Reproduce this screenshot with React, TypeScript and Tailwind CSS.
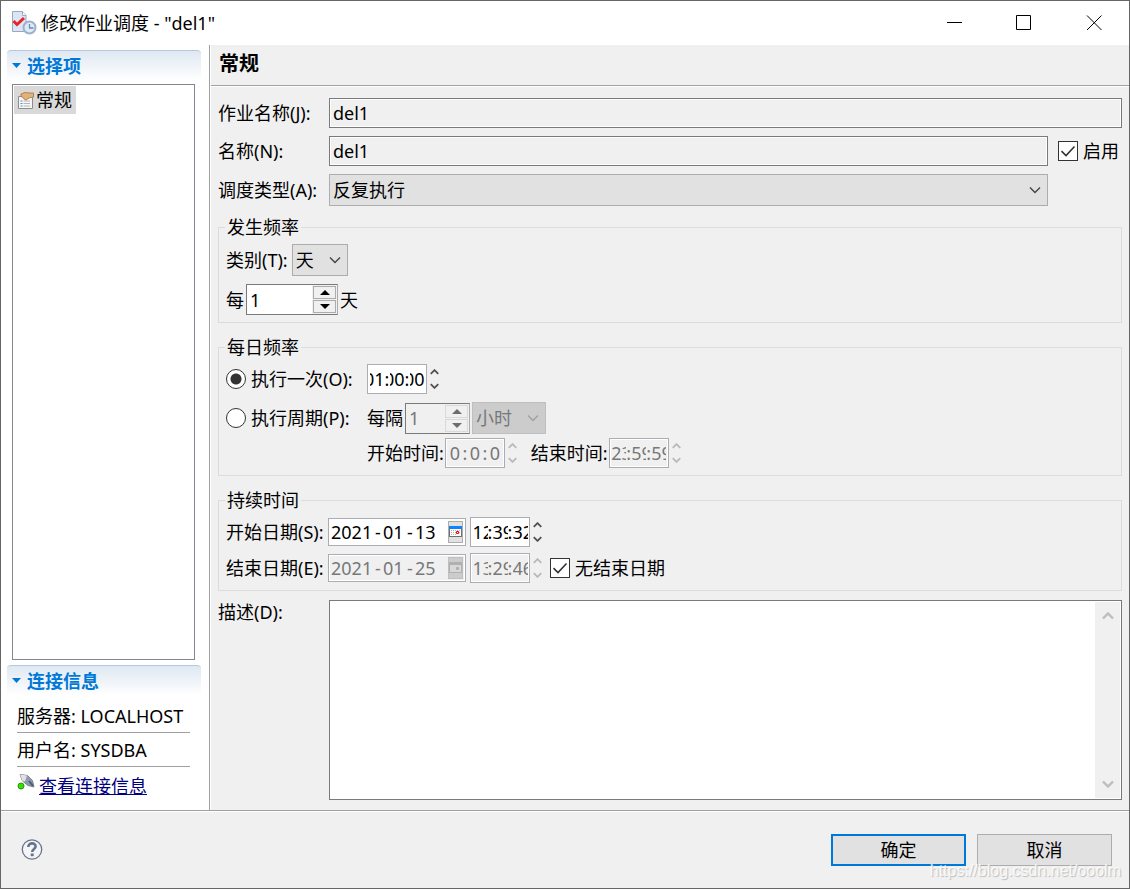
import { useState } from "react";
import type { ReactNode } from "react";

type ChevronProps = { up?: boolean; bold?: boolean; className?: string };

function Chevron({ up, bold, className = "" }: ChevronProps) {
    return (
        <svg viewBox="0 0 12 8" fill="none" stroke="currentColor" strokeWidth={bold ? 2.4 : 1.4} className={className} aria-hidden="true">
            <path d={up ? "M1 6.500L6 1.500L11 6.500" : "M1 1.500L6 6.500L11 1.500"} />
        </svg>
    );
}

function SectionTitle({ children }: { children: ReactNode }) {
    return (
        <button
            type="button"
            className="flex h-[34px] w-full shrink-0 items-center gap-[6px] rounded-t border-t border-[#b4cae0] bg-linear-to-b from-[#dfe8f2] to-white to-90% pb-1 pl-[5px] text-left font-bold text-[#0078d7]"
        >
            <svg viewBox="0 0 9 5" className="h-[5px] w-[9px] fill-current" aria-hidden="true">
                <path d="M0 0h9L4.5 5z" />
            </svg>
            {children}
        </button>
    );
}

type SelectProps = { id: string; options: string[]; className: string; disabled?: boolean; label?: string };

function Select({ id, options, className, disabled, label }: SelectProps) {
    return (
        <div className={`relative h-8 ${className}`}>
            <select
                id={id}
                aria-label={label}
                disabled={disabled}
                className="h-full w-full appearance-none border border-[#adadad] bg-[#e1e1e1] pl-[3px] disabled:border-[#bfbfbf] disabled:bg-[#cccccc] disabled:text-[#787878] disabled:opacity-100"
            >
                {options.map((o) => (
                    <option key={o}>{o}</option>
                ))}
            </select>
            <Chevron
                className={`pointer-events-none absolute top-3 right-[7px] h-2 w-3 ${disabled ? "text-[#a0a0a0]" : "text-[#444444]"}`}
            />
        </div>
    );
}

type SpinnerProps = { id: string; label: string; className: string; disabled?: boolean };

function Spinner({ id, label, className, disabled }: SpinnerProps) {
    const [value, setValue] = useState(1);
    const button = `flex flex-1 items-center justify-center border bg-[#f0f0f0] ${disabled ? "border-[#d9d9d9] text-[#6d6d6d]" : "border-[#acacac] text-black"}`;

    return (
        <div className={`flex h-[31px] border border-[#7a7a7a] border-r-[#acacac] ${disabled ? "bg-[#f0f0f0]" : "bg-white"} ${className}`}>
            <input
                id={id}
                aria-label={label}
                type="text"
                value={value}
                disabled={disabled}
                onChange={(e) => setValue(Number(e.target.value) || 0)}
                className="min-w-0 flex-1 pl-[3px] disabled:text-[#787878]"
            />
            <div className="flex w-[25px] flex-col gap-px bg-[#f0f0f0] p-px">
                <button type="button" aria-label="增加" disabled={disabled} onClick={() => setValue(value + 1)} className={button}>
                    <svg viewBox="0 0 10 5" className="h-[5px] w-[10px] fill-current">
                        <path d="M0 5L5 0L10 5z" />
                    </svg>
                </button>
                <button type="button" aria-label="减少" disabled={disabled} onClick={() => setValue(value - 1)} className={button}>
                    <svg viewBox="0 0 10 5" className="h-[5px] w-[10px] fill-current">
                        <path d="M0 0L5 5L10 0z" />
                    </svg>
                </button>
            </div>
        </div>
    );
}

type TimeProps = { label: string; parts: string[]; disabled?: boolean; fromEnd?: boolean };

function TimeField({ label, parts, disabled, fromEnd }: TimeProps) {
    const units = ["时", "分", "秒"];
    const tone = disabled ? "bg-[#f0f0f0] text-[#787878] shadow-[inset_0_0_0_1px_white]" : "bg-white";
    return (
        <div role="group" aria-label={label} className="flex shrink-0 items-center gap-[3px]">
            <div className={`flex h-[30px] w-[60px] items-center justify-center border border-[#abadb3] ${tone}`}>
                {parts.map((part, i) => (
                    <div key={units[i]} className="flex items-center">
                        {i > 0 && <span className="w-[5px] text-center">:</span>}
                        <input
                            type="text"
                            aria-label={units[i]}
                            dir={fromEnd ? "rtl" : "ltr"}
                            defaultValue={part}
                            disabled={disabled}
                            className={`w-[15px] ${part.length === 1 ? "text-center" : ""}`}
                        />
                    </div>
                ))}
            </div>
            <div className={`flex w-[9px] flex-col items-center gap-2 ${disabled ? "text-[#b8b8b8]" : "text-[#505050]"}`}>
                <button type="button" aria-label={`${label} 增加`} disabled={disabled}>
                    <Chevron up bold className="block h-[6px] w-[9px]" />
                </button>
                <button type="button" aria-label={`${label} 减少`} disabled={disabled}>
                    <Chevron bold className="block h-[6px] w-[9px]" />
                </button>
            </div>
        </div>
    );
}

type DateProps = { label: string; parts: string[]; disabled?: boolean };

function DateField({ label, parts, disabled }: DateProps) {
    return (
        <div
            role="group"
            aria-label={label}
            className={`flex h-7 w-[138px] shrink-0 items-center justify-between border border-[#abadb3] pr-[2px] pl-[2px] ${disabled ? "bg-[#f0f0f0] text-[#787878] shadow-[inset_0_0_0_1px_white]" : "bg-white"}`}
        >
            <div className="flex items-center gap-px">
                <input type="text" aria-label="年" defaultValue={parts[0]} disabled={disabled} className="w-[42px]" />
                <span className="w-2 text-center">-</span>
                <input type="text" aria-label="月" defaultValue={parts[1]} disabled={disabled} className="w-[22px]" />
                <span className="w-2 text-center">-</span>
                <input type="text" aria-label="日" defaultValue={parts[2]} disabled={disabled} className="w-[22px]" />
            </div>
            <button type="button" aria-label="打开日历" disabled={disabled}>
                <svg viewBox="0 0 15 22" className="block h-[22px] w-[15px]">
                    <rect x=".5" y=".5" width="14" height="21" fill={disabled ? "#cccccc" : "#e1e1e1"} stroke={disabled ? "#bfbfbf" : "#adadad"} />
                    <rect x="1.5" y="5.5" width="12" height="10" fill={disabled ? "#d8d8d8" : "#fff"} stroke={disabled ? "#b0b0b0" : "#707070"} />
                    <path d="M1 5h13v3H1z" fill={disabled ? "#b0b0b0" : "#0a84ff"} />
                    <path d="M3 9.500h9M3 11.500h9M3 13.500h6" stroke={disabled ? "#d8d8d8" : "#b0b0b0"} strokeDasharray="1 1" />
                    <path d="M8.500 10.500h2v2h-2z" fill={disabled ? "#b0b0b0" : "#fff"} stroke={disabled ? "#b0b0b0" : "#f00"} />
                </svg>
            </button>
        </div>
    );
}

function CheckBox({ id, label }: { id: string; label: string }) {
    return (
        <div className="flex shrink-0 items-center gap-[5px]">
            <div className="relative size-5">
                <input
                    id={id}
                    type="checkbox"
                    defaultChecked
                    className="peer block size-5 appearance-none border border-[#333333] bg-white"
                />
                <svg
                    viewBox="0 0 20 20"
                    className="pointer-events-none absolute inset-0 hidden size-5 fill-none stroke-[#333333] stroke-[1.6] peer-checked:block"
                    aria-hidden="true"
                >
                    <path d="M3.5 10.2L8 14.5L16.5 5.5" />
                </svg>
            </div>
            <label htmlFor={id}>{label}</label>
        </div>
    );
}

type RadioProps = { id: string; label: string; checked: boolean; onChange: () => void };

function Radio({ id, label, checked, onChange }: RadioProps) {
    return (
        <div className="flex items-center gap-[5px]">
            <input
                id={id}
                type="radio"
                name="daily"
                checked={checked}
                onChange={onChange}
                className="size-5 shrink-0 appearance-none rounded-full border border-[#333333] bg-white bg-[radial-gradient(circle,#333333_5px,white_6px)] not-checked:bg-none"
            />
            <label htmlFor={id}>{label}</label>
        </div>
    );
}

function Group({ title, className = "", children }: { title: string; className?: string; children: ReactNode }) {
    return (
        <fieldset className={`min-w-0 border border-[#dcdcdc] px-[6px] pt-[5px] pb-[7px] ${className}`}>
            <legend className="px-[2px]">{title}</legend>
            <div className="pl-px">{children}</div>
        </fieldset>
    );
}

function App() {
    const [daily, setDaily] = useState("once");

    return (
        <div className="relative flex min-h-screen flex-col border border-[#666666] bg-[#f0f0f0] font-['Noto_Sans','Noto_Sans_CJK_SC',sans-serif] text-[18px] leading-6 text-black">
            <header className="flex h-11 shrink-0 items-center bg-white pl-[10px]">
                <svg viewBox="0 0 26 26" className="mr-1 size-[26px]" aria-hidden="true">
                    <path d="M1.500 1.500h10l3.500 4v16H1.500z" fill="#dce6f3" stroke="#98a8c2" />
                    <path d="M11.500 1.500v4h3.500" fill="#fff" stroke="#98a8c2" />
                    <path d="M2.500 11L6 14.500L13 8" fill="none" stroke="#e8232c" strokeWidth="3" />
                    <circle cx="18.500" cy="17.500" r="6" fill="#dfeaf7" stroke="#9db0cc" strokeWidth="2" />
                    <path d="M18.500 14v4h4" fill="none" stroke="#6f8bb0" strokeWidth="1.300" />
                </svg>
                <h1 className="flex-1">修改作业调度 - "del1"</h1>
                <div className="flex h-full pr-[-1px]">
                    <button type="button" aria-label="最小化" className="flex w-[70px] items-center justify-center">
                        <svg viewBox="0 0 16 16" className="size-4 fill-none stroke-black">
                            <path d="M1 7.500h15" />
                        </svg>
                    </button>
                    <button type="button" aria-label="最大化" className="flex w-[70px] items-center justify-center">
                        <svg viewBox="0 0 16 16" className="size-4 fill-none stroke-black">
                            <path d="M.5.5h14v14H.5z" />
                        </svg>
                    </button>
                    <button type="button" aria-label="关闭" className="flex w-[70px] items-center justify-center">
                        <svg viewBox="0 0 16 16" className="size-4 fill-none stroke-black">
                            <path d="M1 .5L15.500 15M15.500 .5L1 15" />
                        </svg>
                    </button>
                </div>
            </header>

            <div className="flex flex-1">
                <aside className="flex w-[209px] shrink-0 flex-col border-r border-[#a0a0a0] bg-white pt-[5px] pr-2 pb-[5px] pl-[6px]">
                    <SectionTitle>选择项</SectionTitle>
                    <ul className="mr-[6px] mb-[5px] ml-[5px] flex-1 border border-[#828790] p-px">
                        <li className="flex">
                            <button type="button" className="flex h-7 items-center gap-[2px] bg-[#d9d9d9] pr-1 pl-1">
                                <svg viewBox="0 0 16 17" className="h-[17px] w-4" aria-hidden="true">
                                    <path d="M.5 4.500h14v12H.5z" fill="#f7f7f7" stroke="#8d8d8d" />
                                    <path d="M2.500 9h2M2.500 11.500h2M2.500 14h2" stroke="#4d8fc8" />
                                    <path d="M5.500 9H12M5.500 11.500H12M5.500 14H12" stroke="#b5b5b5" />
                                    <path d="M3 2L7 .5L11 1L15.500 1V5L11 6L8 8L6 7L4.500 5L3 4.500z" fill="#e2b27c" stroke="#a8713a" strokeWidth=".8" />
                                </svg>
                                常规
                            </button>
                        </li>
                    </ul>
                    <SectionTitle>连接信息</SectionTitle>
                    <div className="mr-[11px] ml-[10px] flex flex-col">
                        <p className="flex h-[34px] items-center border-b border-[#a0a0a0] whitespace-nowrap">服务器: LOCALHOST</p>
                        <p className="flex h-[34px] items-center border-b border-[#a0a0a0] whitespace-nowrap">用户名: SYSDBA</p>
                        <div className="flex h-[38px] gap-1 pt-[7px]">
                            <svg viewBox="0 0 18 18" className="size-[18px]" aria-hidden="true">
                                <path d="M3 .500L10.500 1.500L15.500 6.500L17 13L11 11.500L5.500 7z" fill="#8f9aab" stroke="#7d838d" />
                                <path d="M3 .500L10 1.500L8 7.500L5.500 7z" fill="#dfe1e4" />
                                <path d="M12 7L16 12" stroke="#4a5b7b" strokeWidth="2" />
                                <circle cx="4" cy="12" r="3" fill="#35e000" stroke="#249a08" />
                            </svg>
                            <a href="#connection" className="text-[#000080] underline">
                                查看连接信息
                            </a>
                        </div>
                    </div>
                </aside>

                <main className="flex min-w-0 flex-1 flex-col border-l border-white">
                    <h2 className="flex h-[41px] shrink-0 items-center border-b border-[#a0a0a0] pb-[2px] pl-2 text-[20px] font-bold">常规</h2>
                    <form className="flex flex-1 flex-col border-t border-white px-[7px] pt-[11px] pb-[10px]">
                        <div className="grid grid-cols-[111px_1fr] items-center gap-y-2">
                            <label htmlFor="job">作业名称(J):</label>
                            <input
                                id="job"
                                type="text"
                                readOnly
                                defaultValue="del1"
                                className="h-[30px] min-w-0 border border-[#7a7a7a] bg-[#f0f0f0] pl-[3px] shadow-[inset_0_0_0_1px_white]"
                            />
                            <label htmlFor="name">名称(N):</label>
                            <div className="flex items-center gap-[10px]">
                                <input
                                    id="name"
                                    type="text"
                                    readOnly
                                    defaultValue="del1"
                                    className="h-[30px] min-w-0 flex-1 border border-[#7a7a7a] bg-[#f0f0f0] pl-[3px] shadow-[inset_0_0_0_1px_white]"
                                />
                                <div className="w-16">
                                    <CheckBox id="enabled" label="启用" />
                                </div>
                            </div>
                            <label htmlFor="kind">调度类型(A):</label>
                            <Select id="kind" options={["反复执行", "执行一次"]} className="mr-[74px]" />
                        </div>

                        <Group title="发生频率" className="mt-[9px]">
                            <div className="flex items-center gap-1">
                                <label htmlFor="category">类别(T):</label>
                                <Select id="category" options={["天", "周", "月"]} className="w-14" />
                            </div>
                            <div className="mt-2 flex items-center gap-[2px]">
                                <label htmlFor="every">每</label>
                                <Spinner id="every" label="每几天" className="w-[92px]" />
                                <span>天</span>
                            </div>
                        </Group>

                        <Group title="每日频率" className="mt-3">
                            <div className="grid grid-cols-[141px_1fr] items-center">
                                <Radio id="once" label="执行一次(O):" checked={daily === "once"} onChange={() => setDaily("once")} />
                                <TimeField label="执行时间" parts={["01", "00", "00"]} fromEnd />
                                <div className="mt-2">
                                    <Radio id="period" label="执行周期(P):" checked={daily === "period"} onChange={() => setDaily("period")} />
                                </div>
                                <div className="mt-2 flex items-center gap-[2px]">
                                    <label htmlFor="interval">每隔</label>
                                    <Spinner id="interval" label="间隔" className="w-[65px]" disabled />
                                    <Select id="unit" label="间隔单位" options={["小时", "分钟"]} className="w-[74px]" disabled />
                                </div>
                                <div className="col-start-2 mt-1 flex items-center gap-[14px]">
                                    <div className="flex items-center gap-px">
                                        <span>开始时间:</span>
                                        <TimeField label="开始时间" parts={["0", "0", "0"]} disabled />
                                    </div>
                                    <div className="flex items-center gap-px">
                                        <span>结束时间:</span>
                                        <TimeField label="结束时间" parts={["23", "59", "59"]} disabled />
                                    </div>
                                </div>
                            </div>
                        </Group>

                        <Group title="持续时间" className="mt-3">
                            <div className="grid grid-cols-[102px_1fr] items-center gap-y-[6px]">
                                <span>开始日期(S):</span>
                                <div className="flex items-center gap-1">
                                    <DateField label="开始日期" parts={["2021", "01", "13"]} />
                                    <TimeField label="开始日期时间" parts={["12", "39", "32"]} />
                                </div>
                                <span>结束日期(E):</span>
                                <div className="flex items-center gap-1">
                                    <DateField label="结束日期" parts={["2021", "01", "25"]} disabled />
                                    <TimeField label="结束日期时间" parts={["13", "29", "46"]} disabled />
                                    <div className="pl-1">
                                        <CheckBox id="forever" label="无结束日期" />
                                    </div>
                                </div>
                            </div>
                        </Group>

                        <div className="mt-[9px] grid flex-1 grid-cols-[111px_1fr]">
                            <label htmlFor="description">描述(D):</label>
                            <div className="flex min-h-[120px] border border-[#7a7a7a] bg-white p-px">
                                <textarea id="description" className="min-w-0 flex-1 resize-none px-1" />
                                <div className="flex w-[25px] flex-col items-center justify-between bg-[#f0f0f0] py-[10px] text-[#bdbdbd]">
                                    <Chevron up bold className="h-2 w-3" />
                                    <Chevron bold className="h-2 w-3" />
                                </div>
                            </div>
                        </div>
                    </form>
                </main>
            </div>

            <footer className="flex h-[78px] shrink-0 items-center justify-between border-t border-[#a0a0a0] pr-[17px] pl-5 shadow-[inset_0_1px_0_white]">
                <button type="button" aria-label="帮助">
                    <svg viewBox="0 0 22 22" className="block size-[22px]">
                        <circle cx="11" cy="10.500" r="9.700" fill="#f5f5f5" stroke="#66758f" strokeWidth="1.300" />
                        <path d="M7.300 8C7.300 3 15 3.500 14.600 7.700C14.400 10 11.200 10 11.200 13" fill="none" stroke="#66758f" strokeWidth="2.600" />
                        <path d="M9.700 14.500h3v2.700h-3z" fill="#66758f" />
                    </svg>
                </button>
                <div className="flex gap-[11px]">
                    <button type="button" className="h-8 w-[135px] border-2 border-[#0078d7] bg-[#e1e1e1]">
                        确定
                    </button>
                    <button type="button" className="h-8 w-[135px] border border-[#adadad] bg-[#e1e1e1]">
                        取消
                    </button>
                </div>
            </footer>

            <span className="pointer-events-none absolute right-2 bottom-[5px] font-['Liberation_Sans',sans-serif] text-[16px] text-white/80 [text-shadow:1px_1px_1px_#bbbbbb]">
                https://blog.csdn.net/ooolm
            </span>
        </div>
    );
}

export default App;
